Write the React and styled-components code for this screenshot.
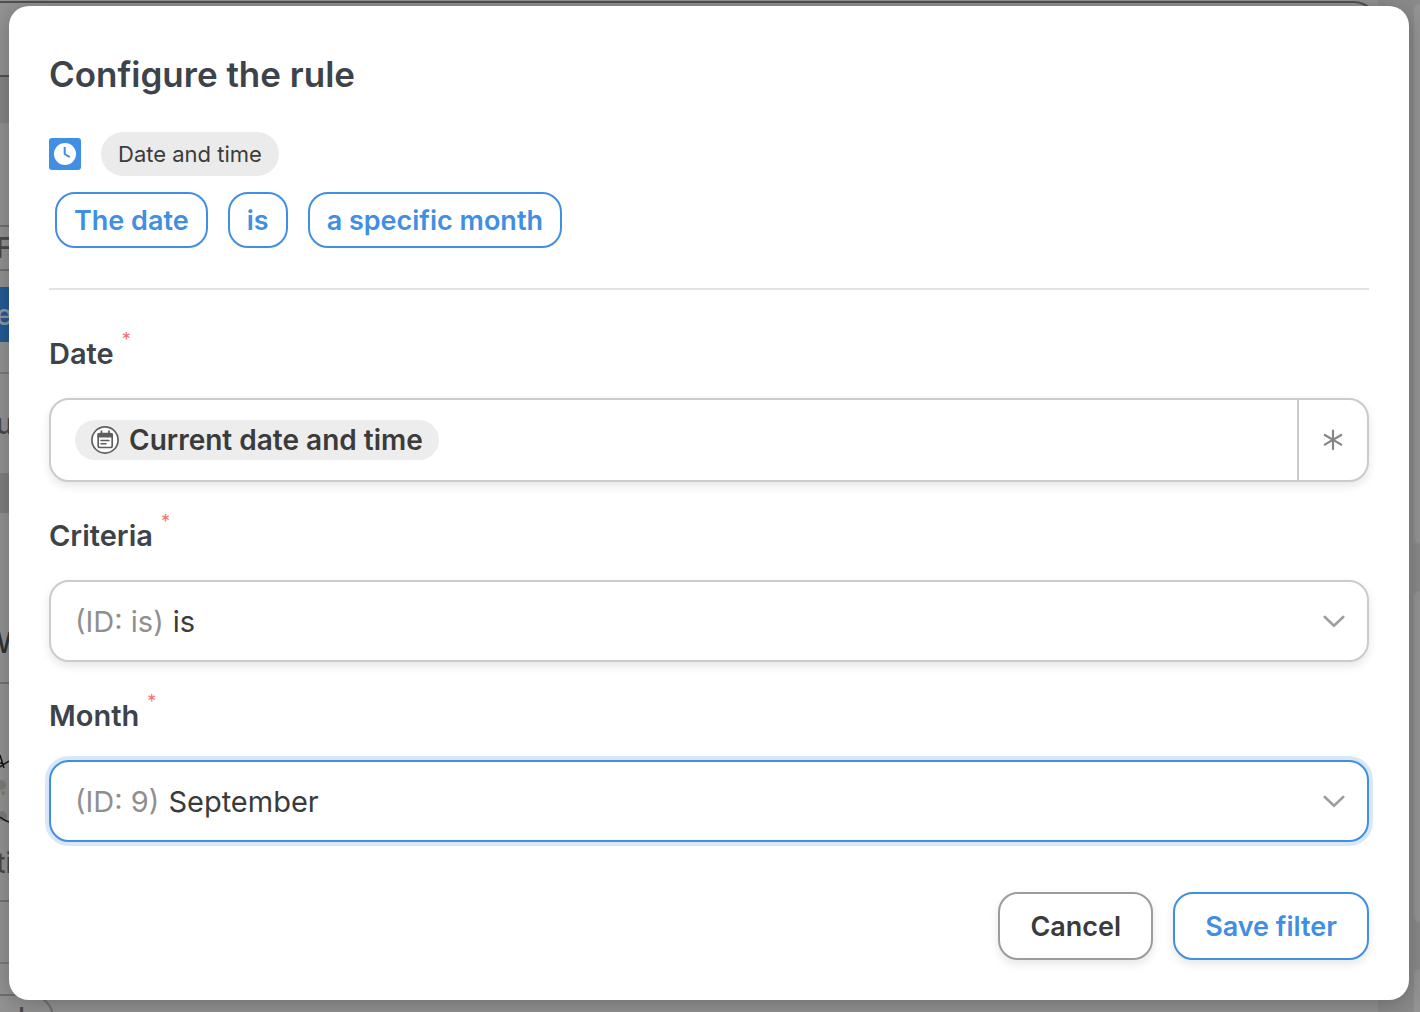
import { useState } from 'react';
import styled, { createGlobalStyle } from 'styled-components';

const colors = {
  accent: '#408fe2',
  heading: '#3d434b',
  text: '#3b3b3b',
  muted: '#8f8f8f',
  line: '#cbcbcb',
  required: '#f0716b',
};

const GlobalStyle = createGlobalStyle`
  *, *::before, *::after {
    box-sizing: border-box;
  }

  body {
    margin: 0;
    background: #8b8b8b;
    font-family: Inter, 'Liberation Sans', sans-serif;
    color: ${colors.text};
    -webkit-font-smoothing: antialiased;
  }

  button, input, select {
    font: inherit;
    color: inherit;
  }
`;

const Screen = styled.div`
  position: relative;
  min-height: 100vh;
  overflow: hidden;
  padding: 6px 11px 12px 9px;
`;

/* The page left dimmed under the dialog */
const Underlay = styled.div`
  position: absolute;
  inset: 0;
  display: flex;
  gap: 36px;
  overflow: hidden;
  color: #4a4a4a;
  font-size: 28px;
  line-height: 32px;
  font-weight: 500;
  text-indent: -4px;
`;

const UnderlayPanel = styled.div`
  flex: 1;
  display: flex;
  flex-direction: column;
  padding-top: 1px;
  background: #939393;
`;

const PanelTop = styled.div`
  flex: none;
  height: 76px;
  border: solid #4f5154;
  border-width: 2px 2px 2px 0;
  border-top-right-radius: 24px;
`;

const Band = styled.div`
  flex: none;
  display: flex;
  align-items: center;
  height: ${({ $height }) => $height}px;
  background: ${({ $background }) => $background || 'transparent'};
  color: ${({ $color }) => $color || 'inherit'};
  border-bottom: ${({ $line }) => ($line ? `2px solid ${$line}` : 'none')};
`;

const BottomPill = styled.div`
  flex: none;
  width: 54px;
  height: 60px;
  padding: 6px 22px;
  border: 2px solid #717171;
  border-left: 0;
  border-top-right-radius: 24px;
`;

const UnderlaySide = styled.div`
  display: flex;
  flex-direction: column;
  gap: 47px;
  width: 6px;
  padding-top: 4px;
`;

const SideCard = styled.div`
  flex: none;
  height: ${({ $height }) => $height}px;
  border-radius: 14px 0 0 14px;
  background: #959595;
`;

const Dialog = styled.form`
  position: relative;
  min-height: calc(100vh - 18px);
  padding: 44px 40px 40px;
  border-radius: 20px;
  background: #fff;
  box-shadow: 0 4px 24px rgba(0, 0, 0, 0.25);
`;

const Title = styled.h1`
  margin: 0 0 34px;
  font-size: 35px;
  line-height: 48px;
  font-weight: 600;
  color: ${colors.heading};
`;

const ModuleRow = styled.div`
  display: flex;
  align-items: center;
  gap: 20px;
  margin-bottom: 16px;
`;

const ModuleName = styled.span`
  padding: 0 17px;
  border-radius: 22px;
  background: #ebebeb;
  font-size: 22px;
  line-height: 44px;
`;

const RuleParts = styled.div`
  display: flex;
  flex-wrap: wrap;
  gap: 20px;
  padding: 0 6px 40px;
  border-bottom: 2px solid #e3e3e3;
`;

const RulePart = styled.button`
  height: 56px;
  padding: 0 17px;
  border: 2px solid ${colors.accent};
  border-radius: 20px;
  background: #fff;
  color: ${colors.accent};
  font-size: 27px;
  font-weight: 600;
`;

const Fields = styled.div`
  display: flex;
  flex-direction: column;
  gap: 32px;
  padding: 42px 0 50px;
`;

const FieldLabel = styled.label`
  display: flex;
  gap: 8px;
  margin-bottom: 22px;
  color: ${colors.heading};
  font-size: 29px;
  line-height: 44px;
  font-weight: 600;
`;

const Required = styled.span`
  color: ${colors.required};
  font-size: 18px;
  line-height: 16px;
  font-weight: 400;
`;

const Control = styled.div`
  display: flex;
  align-items: center;
  height: ${({ $tall }) => ($tall ? 84 : 82)}px;
  padding-left: 24px;
  border: 2px solid ${({ $focused }) => ($focused ? colors.accent : colors.line)};
  border-radius: 20px;
  background: #fff;
  box-shadow: ${({ $focused }) =>
    $focused ? '0 0 0 4px #d9e8f9' : '0 4px 10px rgba(0, 0, 0, 0.1)'};
`;

const Token = styled.span`
  display: flex;
  align-items: center;
  gap: 10px;
  height: 40px;
  padding: 0 16px;
  border-radius: 20px;
  background: #ededed;
  font-size: 28px;
  font-weight: 600;
`;

const TextInput = styled.input`
  flex: 1;
  min-width: 0;
  height: 100%;
  padding: 0 16px;
  border: 0;
  outline: 0;
  background: transparent;
  font-size: 29px;
`;

const WildcardButton = styled.button`
  display: flex;
  align-items: center;
  justify-content: center;
  width: 70px;
  height: 100%;
  padding: 0;
  border: 0;
  border-left: 2px solid ${colors.line};
  background: transparent;
  color: #858585;
`;

const OptionId = styled.span`
  color: ${colors.muted};
  font-size: 29px;
`;

const Select = styled.select`
  flex: 1;
  min-width: 0;
  height: 100%;
  padding: 0 9px;
  border: 0;
  outline: 0;
  appearance: none;
  background: transparent;
  font-size: 29px;
`;

const Chevron = styled.svg`
  flex: none;
  margin-right: 22px;
  pointer-events: none;
`;

const Actions = styled.div`
  display: flex;
  justify-content: flex-end;
  gap: 20px;
`;

const ActionButton = styled.button`
  height: 68px;
  padding: 0 30px;
  border: 2px solid ${({ $primary }) => ($primary ? colors.accent : '#9c9c9c')};
  border-radius: 20px;
  background: #fff;
  box-shadow: 0 4px 10px rgba(0, 0, 0, 0.1);
  color: ${({ $primary }) => ($primary ? colors.accent : colors.text)};
  font-size: 27px;
  font-weight: 600;
`;

const ClockIcon = () => (
  <svg width="32" height="32" viewBox="0 0 32 32" aria-hidden="true">
    <rect width="32" height="32" rx="3" fill={colors.accent} />
    <circle cx="16" cy="16" r="11" fill="#fff" />
    <path d="M15.7 9v7l5 3.2" fill="none" stroke={colors.accent} strokeWidth="2" />
  </svg>
);

const CalendarIcon = () => (
  <svg width="28" height="28" viewBox="0 0 28 28" aria-hidden="true">
    <circle cx="14" cy="14" r="13.1" fill="#fff" stroke="#5e5e5e" strokeWidth="1.7" />
    <rect x="7.2" y="7.5" width="14" height="14" rx="1.8" fill="none" stroke="#5e5e5e" strokeWidth="1.7" />
    <path d="M6.5 7.5h15.4V11.5H6.5z" fill="#5e5e5e" />
    <path d="M10.5 4.5v3M18 4.5v3" stroke="#5e5e5e" strokeWidth="1.7" />
    <path d="M10 14.6h8M10 17.7h5" stroke="#5e5e5e" strokeWidth="1.5" strokeLinecap="round" />
  </svg>
);

const AsteriskIcon = () => (
  <svg width="20" height="22" viewBox="0 0 20 22" aria-hidden="true">
    <path
      d="M10 1.5v18.6M1.8 6l16.4 9.6M18.2 6L1.8 15.6"
      fill="none"
      stroke="currentColor"
      strokeWidth="2.2"
      strokeLinecap="round"
    />
  </svg>
);

const ChevronIcon = () => (
  <Chevron width="22" height="14" viewBox="0 0 22 14" aria-hidden="true">
    <path
      d="M1.8 3l9.2 8.8L20.2 3"
      fill="none"
      stroke="#9e9e9e"
      strokeWidth="2.6"
      strokeLinecap="round"
    />
  </Chevron>
);

const Scribble = () => (
  <svg width="9" height="76" viewBox="0 0 9 76" aria-hidden="true">
    <circle cx="1" cy="35" r="5" fill="#7f7d77" />
    <circle cx="3" cy="43" r="2" fill="#807e78" />
    <circle cx="2" cy="66" r="5" fill="#7f7d77" />
    <path d="M0 5l4 13M0 13l4 1M0 17l9-6M0 67q4 3 9 5" fill="none" stroke="#161616" strokeWidth="1.5" />
  </svg>
);

const PageUnderDialog = () => (
  <Underlay aria-hidden="true">
    <UnderlayPanel>
      <PanelTop />
      <Band $height={46} $background="#858585" />
      <Band $height={104} $line="#717171" />
      <Band $height={44} $line="#717171">F</Band>
      <Band $height={16} />
      <Band $height={55} $background="#265a94" $color="#8f9aa6">e</Band>
      <Band $height={32} $line="#7c7c7c" />
      <Band $height={99}>u</Band>
      <Band $height={40} $background="#808080" />
      <Band $height={90} />
      <Band $height={81} $line="#737373" $color="#2f3337">W</Band>
      <Band $height={66} />
      <Band $height={76}><Scribble /></Band>
      <Band $height={76} $line="#737373">ti</Band>
      <Band $height={62} $line="#7c7c7c" />
      <Band $height={30} />
      <BottomPill>k</BottomPill>
    </UnderlayPanel>
    <UnderlaySide>
      <SideCard $height={540} />
      <SideCard $height={331} />
      <SideCard $height={331} />
    </UnderlaySide>
  </Underlay>
);

const Field = ({ id, label, children }) => (
  <div>
    <FieldLabel htmlFor={id}>
      {label}
      <Required>*</Required>
    </FieldLabel>
    {children}
  </div>
);

const SelectField = ({ id, label, options, initial, focused, onFocus, onBlur }) => {
  const [value, setValue] = useState(initial);

  return (
    <Field id={id} label={label}>
      <Control $focused={focused}>
        <OptionId>(ID: {value})</OptionId>
        <Select
          id={id}
          value={value}
          onChange={(e) => setValue(e.target.value)}
          onFocus={onFocus}
          onBlur={onBlur}
        >
          {options.map((option) => (
            <option key={option.id} value={option.id}>{option.name}</option>
          ))}
        </Select>
        <ChevronIcon />
      </Control>
    </Field>
  );
};

const criteria = [{ id: 'is', name: 'is' }];
const months = [{ id: '9', name: 'September' }];

const App = () => {
  const [focused, setFocused] = useState('month');

  const focusProps = (id) => ({
    focused: focused === id,
    onFocus: () => setFocused(id),
    onBlur: () => setFocused(null),
  });

  return (
    <>
      <GlobalStyle />
      <Screen>
        <PageUnderDialog />
        <Dialog role="dialog" aria-labelledby="title" onSubmit={(e) => e.preventDefault()}>
          <Title id="title">Configure the rule</Title>
          <ModuleRow>
            <ClockIcon />
            <ModuleName>Date and time</ModuleName>
          </ModuleRow>
          <RuleParts>
            <RulePart type="button">The date</RulePart>
            <RulePart type="button">is</RulePart>
            <RulePart type="button">a specific month</RulePart>
          </RuleParts>
          <Fields>
            <Field id="date" label="Date">
              <Control $tall>
                <Token>
                  <CalendarIcon />
                  Current date and time
                </Token>
                <TextInput id="date" type="text" />
                <WildcardButton type="button" aria-label="Insert a variable">
                  <AsteriskIcon />
                </WildcardButton>
              </Control>
            </Field>
            <SelectField id="criteria" label="Criteria" options={criteria} initial="is" {...focusProps('criteria')} />
            <SelectField id="month" label="Month" options={months} initial="9" {...focusProps('month')} />
          </Fields>
          <Actions>
            <ActionButton type="button">Cancel</ActionButton>
            <ActionButton type="submit" $primary>Save filter</ActionButton>
          </Actions>
        </Dialog>
      </Screen>
    </>
  );
};

export default App;
